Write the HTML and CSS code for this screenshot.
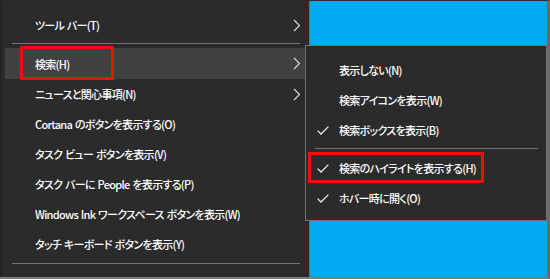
FILE: index.html
```html
<!DOCTYPE html>
<html lang="ja">
<head>
<meta charset="utf-8">
<title>タスクバー メニュー</title>
<link rel="stylesheet" href="styles.css">
</head>
<body>
<div class="screen">
  <div class="menu main">
    <div class="item"><span class="label">ツール バー(T)</span><svg class="chev" width="8" height="13" viewBox="0 0 8 13"><polyline points="1,1 6.5,6.5 1,12"/></svg></div>
    <div class="sep"></div>
    <div class="item active tall"><span class="label">検索(H)</span><svg class="chev" width="8" height="13" viewBox="0 0 8 13"><polyline points="1,1 6.5,6.5 1,12"/></svg><span class="mark mark-search"></span></div>
    <div class="item"><span class="label">ニュースと関心事項(N)</span><svg class="chev" width="8" height="13" viewBox="0 0 8 13"><polyline points="1,1 6.5,6.5 1,12"/></svg></div>
    <div class="item"><span class="label">Cortana のボタンを表示する(O)</span></div>
    <div class="item"><span class="label">タスク ビュー ボタンを表示(V)</span></div>
    <div class="item"><span class="label">タスク バーに People を表示する(P)</span></div>
    <div class="item"><span class="label">Windows Ink ワークスペース ボタンを表示(W)</span></div>
    <div class="item"><span class="label">タッチ キーボード ボタンを表示(Y)</span></div>
    <div class="sep last"></div>
  </div>

  <div class="menu sub">
    <div class="item"><span class="check"></span><span class="label">表示しない(N)</span></div>
    <div class="item"><span class="check"></span><span class="label">検索アイコンを表示(W)</span></div>
    <div class="item"><span class="check"><svg width="12" height="9" viewBox="0 0 12 9"><polyline points="0.6,4.6 4,8 11.4,0.6"/></svg></span><span class="label">検索ボックスを表示(B)</span></div>
    <div class="sep"></div>
    <div class="item"><span class="check"><svg width="12" height="9" viewBox="0 0 12 9"><polyline points="0.6,4.6 4,8 11.4,0.6"/></svg></span><span class="label">検索のハイライトを表示する(H)</span><span class="mark mark-highlight"></span></div>
    <div class="item"><span class="check"><svg width="12" height="9" viewBox="0 0 12 9"><polyline points="0.6,4.6 4,8 11.4,0.6"/></svg></span><span class="label">ホバー時に開く(O)</span></div>
  </div>
</div>
</body>
</html>
```

FILE: styles.css
```css
html, body {
  margin: 0;
  padding: 0;
  background: #2b2b2b;
}

.screen {
  position: relative;
  width: 550px;
  height: 279px;
  box-sizing: border-box;
  background: #00a9f2;
  border-top: 1px solid #2a2a2a;
  border-right: 3px solid #6a6a6a;
  border-bottom: 2px solid #7d7d7d;
  display: flex;
  align-items: flex-start;
  overflow: hidden;
  font-family: "Noto Sans CJK JP", "Noto Sans", sans-serif;
  font-feature-settings: "palt";
  font-size: 11px;
  font-weight: 500;
  letter-spacing: -0.7px;
  word-spacing: 1px;
  color: #ffffff;
}

.menu {
  background: #2b2b2b;
  box-sizing: border-box;
}

.main {
  width: 310px;
  height: 276px;
  border-right: 1px solid #6f6f6f;
  border-left: 2px solid #242424;
  padding: 9px 0 0 0;
}

.item {
  position: relative;
  height: 30px;
  display: flex;
  align-items: center;
  white-space: nowrap;
}

.main .item {
  padding-left: 33px;
  padding-right: 8px;
}

.main .item.tall {
  height: 31px;
}

.main .item.active {
  background: #414141;
  margin-left: 3px;
  padding-left: 30px;
}

.label {
  flex: 1;
}

.chev {
  fill: none;
  stroke: #d8d8d8;
  stroke-width: 1.2;
}

.sep {
  height: 1px;
  background: #737373;
}

.main .sep {
  margin: 3px 9px 4px 10px;
}

.main .sep.last {
  margin-top: 4px;
}

.sub {
  position: absolute;
  left: 305px;
  top: 44px;
  width: 242px;
  height: 176px;
  border: 1px solid #6f6f6f;
  padding: 9px 0 7px 0;
}

.sub .item {
  padding-left: 11px;
}

.sub .sep {
  margin: 3px 8px 4px 9px;
}

.check {
  width: 22px;
  display: flex;
  align-items: center;
}

.check svg {
  fill: none;
  stroke: #e9eef6;
  stroke-width: 1.3;
}

.mark {
  position: absolute;
  border: 3px solid #f20d0d;
  box-sizing: border-box;
  pointer-events: none;
}

.mark-search {
  left: 15px;
  top: -2px;
  width: 94px;
  height: 34px;
}

.mark-highlight {
  left: 2px;
  top: -1px;
  width: 176px;
  height: 31px;
}
```
